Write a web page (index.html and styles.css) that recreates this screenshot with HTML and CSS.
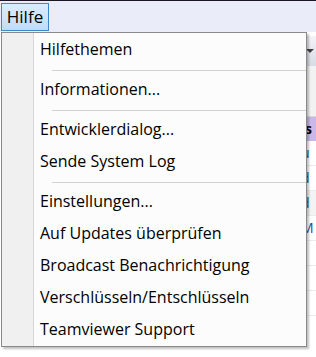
FILE: index.html
```html
<!DOCTYPE html>
<html>
<head>
<meta charset="UTF-8">
<title>Hilfe</title>
<link rel="stylesheet" href="styles.css">
</head>
<body>
<div class="menubar">
	<span class="menu-title">Hilfe</span>
</div>
<div class="backdrop">
	<div class="combo"><span class="arrow"></span></div>
	<div class="band"></div>
	<div class="header">s</div>
	<div class="cell">u</div>
	<div class="cell">d</div>
	<div class="cell alt">d</div>
	<div class="cell">M</div>
	<div class="cell"></div>
	<div class="cell"></div>
	<div class="cell"></div>
</div>

<ul class="dropdown">
	<li class="item">Hilfethemen</li>
	<li class="sep"></li>
	<li class="item">Informationen...</li>
	<li class="sep"></li>
	<li class="item">Entwicklerdialog...</li>
	<li class="item">Sende System Log</li>
	<li class="sep"></li>
	<li class="item">Einstellungen...</li>
	<li class="item">Auf Updates überprüfen</li>
	<li class="item">Broadcast Benachrichtigung</li>
	<li class="item">Verschlüsseln/Entschlüsseln</li>
	<li class="item">Teamviewer Support</li>
</ul>
</body>
</html>
```
FILE: styles.css
```css
body {
	margin : 0;
	width : 316px;
	height : 357px;
	overflow : hidden;
	background-color : #ffffff;
	font-family : "Open Sans", "Noto Sans", sans-serif;
	position : relative;
}
.menubar {
	height : 31px;
	border-top : 1px solid #1c1420;
	background-color : #eaedf9;
	display : flex;
	align-items : flex-start;
	padding-left : 1px;
}
.menu-title {
	margin-top : 2px;
	width : 46px;
	height : 26px;
	border : 1px solid #3d88c9;
	background : linear-gradient(#dcecfc, #c1dcf6);
	font-size : 17px;
	line-height : 26px;
	text-align : center;
	color : #000000;
}
.backdrop {
	display : flex;
	flex-direction : column;
	align-items : flex-end;
	background-color : #ffffff;
	height : 325px;
}
.combo {
	width : 12px;
	height : 30px;
	margin-top : 4px;
	background : linear-gradient(#f4f4f8, #d8dae4);
	display : flex;
	align-items : center;
	justify-content : center;
}
.arrow {
	border-left : 4px solid transparent;
	border-right : 4px solid transparent;
	border-top : 4px solid #404040;
}
.band {
	width : 12px;
	height : 50px;
	background-color : #f2f2f2;
	border-bottom : 1px solid #d8d8d8;
}
.header {
	width : 12px;
	height : 24px;
	background-color : #cbb8e8;
	font-size : 14px;
	font-weight : bold;
	line-height : 24px;
	text-indent : 1px;
	overflow : hidden;
}
.cell {
	width : 12px;
	height : 24px;
	font-size : 14px;
	line-height : 24px;
	color : #1d4f9e;
	border-bottom : 1px solid #ececec;
	overflow : hidden;
	text-indent : -3px;
}
.cell.alt {
	background-color : #f3f3f3;
}
.dropdown {
	position : absolute;
	left : 1px;
	top : 32px;
	width : 304px;
	margin : 0;
	padding : 1px 0 0 0;
	list-style : none;
	border : 1px solid #8a8a8a;
	background : linear-gradient(to right, #f0f0f0 0, #f0f0f0 31px, #d6d6d6 31px, #d6d6d6 32px, #fcfcfc 32px);
	box-shadow : 2px 2px 2px rgba(0, 0, 0, 0.25);
}
.item {
	height : 32px;
	line-height : 31px;
	padding-left : 38px;
	font-size : 16px;
	color : #000000;
	white-space : nowrap;
}
.sep {
	height : 8px;
	display : flex;
	align-items : center;
	padding-left : 50px;
}
.sep::after {
	content : "";
	flex : 1;
	height : 1px;
	background-color : #d2d2d2;
}
```
